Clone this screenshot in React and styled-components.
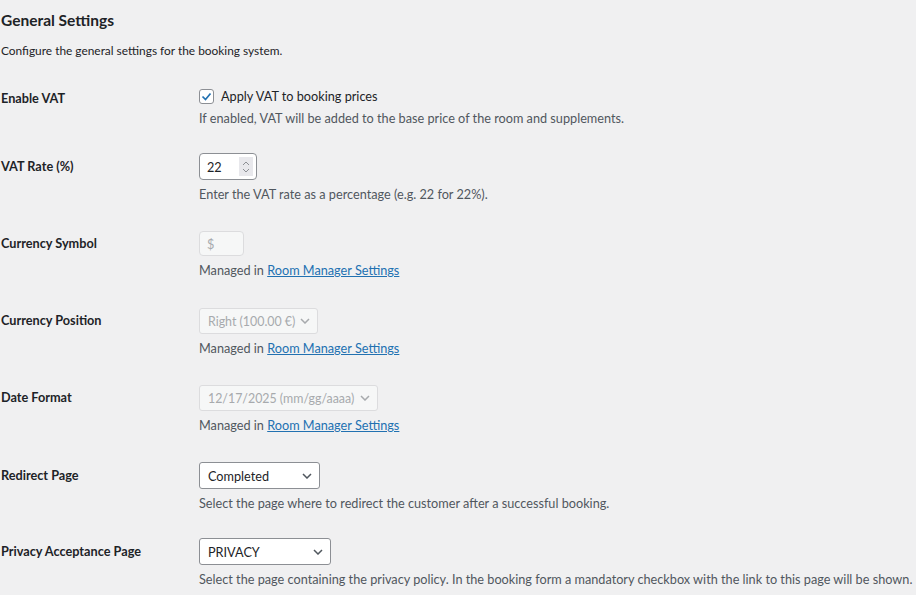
import styled, { createGlobalStyle } from "styled-components";

const GlobalStyle = createGlobalStyle`
  body {
    margin: 0;
    background: #f0f0f1;
    font-family: Lato, "Open Sans", sans-serif;
    color: #1d2327;
  }
`;

const Page = styled.div`
  padding: 8px 0 0 1px;
`;

const Heading = styled.h2`
  font-size: 15.5px;
  font-weight: 700;
  margin: 0;
  line-height: 24px;
  color: #1d2327;
`;

const Intro = styled.p`
  font-size: 11.9px;
  margin: 10px 0 0;
  line-height: 17px;
  color: #1d2327;
`;

const Table = styled.div`
  margin-top: 29px;
  display: flex;
  flex-direction: column;
`;

const Row = styled.div`
  display: grid;
  grid-template-columns: 198px 1fr;
  height: ${(p) => p.h || 77}px;
  align-items: start;
`;

const Label = styled.div`
  font-size: 12.7px;
  font-weight: 700;
  line-height: 17px;
  padding-top: ${(p) => p.top || 0}px;
  color: #1d2327;
`;

const Field = styled.div`
  display: flex;
  flex-direction: column;
  align-items: flex-start;
`;

const Desc = styled.div`
  font-size: 12.7px;
  line-height: 17px;
  margin-top: ${(p) => p.gap || 6}px;
  color: #50575e;
  white-space: nowrap;
`;

const Link = styled.a`
  color: #2271b1;
  text-decoration: underline;
  cursor: pointer;
`;

const CheckLine = styled.label`
  display: flex;
  align-items: center;
  gap: 7px;
  font-size: 12.7px;
  line-height: 17px;
  color: #1d2327;
`;

const Box = styled.span`
  width: 13px;
  height: 13px;
  border: 1px solid #8c8f94;
  border-radius: 3px;
  background: #fff;
  display: flex;
  align-items: center;
  justify-content: center;
`;

const NumberBox = styled.div`
  width: 58px;
  height: 27px;
  box-sizing: border-box;
  border: 1px solid #8c8f94;
  border-radius: 4px;
  background: #fff;
  display: flex;
  align-items: center;
  justify-content: space-between;
  padding: 0 3px 0 7px;
  font-size: 12.7px;
  color: #1d2327;
`;

const Spinner = styled.span`
  width: 14px;
  height: 19px;
  background: #e8e8ec;
  display: flex;
  align-items: center;
  justify-content: center;
`;

const TextBox = styled.div`
  width: ${(p) => p.w}px;
  height: 25px;
  box-sizing: border-box;
  border: 1px solid #dcdcde;
  border-radius: 4px;
  background: #f6f7f7;
  display: flex;
  align-items: center;
  padding-left: 7px;
  font-size: 12.7px;
  color: #a7aaad;
`;

const Select = styled.div`
  width: ${(p) => p.w}px;
  height: ${(p) => (p.disabled ? 26 : 27)}px;
  box-sizing: border-box;
  border: 1px solid ${(p) => (p.disabled ? "#dcdcde" : "#8c8f94")};
  border-radius: 3px;
  background: ${(p) => (p.disabled ? "#f6f7f7" : "#fff")};
  color: ${(p) => (p.disabled ? "#a7aaad" : "#1d2327")};
  display: flex;
  align-items: center;
  justify-content: space-between;
  padding: 0 7px 0 8px;
  font-size: ${(p) => (p.disabled ? 12.4 : 12.7)}px;
  white-space: nowrap;
`;

const Chevron = ({ color }) => (
  <svg width="10" height="6" viewBox="0 0 10 6" fill="none">
    <path d="M1 1l4 4 4-4" stroke={color} strokeWidth="1.5" />
  </svg>
);

const Managed = () => (
  <Desc gap={6}>
    Managed in <Link>Room Manager Settings</Link>
  </Desc>
);

export default function App() {
  return (
    <Page>
      <GlobalStyle />
      <Heading>General Settings</Heading>
      <Intro>Configure the general settings for the booking system.</Intro>
      <Table>
        <Row h={65}>
          <Label top={2}>Enable VAT</Label>
          <Field>
            <CheckLine>
              <Box>
                <svg width="11" height="9" viewBox="0 0 11 9" fill="none">
                  <path d="M1.5 4.5l3 3 5-6" stroke="#2271b1" strokeWidth="1.7" />
                </svg>
              </Box>
              Apply VAT to booking prices
            </CheckLine>
            <Desc gap={5}>If enabled, VAT will be added to the base price of the room and supplements.</Desc>
          </Field>
        </Row>
        <Row h={78}>
          <Label top={5}>VAT Rate (%)</Label>
          <Field>
            <NumberBox>
              22
              <Spinner>
                <svg width="8" height="14" viewBox="0 0 8 14" fill="none">
                  <path d="M1 5l3-3 3 3M1 9l3 3 3-3" stroke="#8c8f94" strokeWidth="1" />
                </svg>
              </Spinner>
            </NumberBox>
            <Desc gap={6}>Enter the VAT rate as a percentage (e.g. 22 for 22%).</Desc>
          </Field>
        </Row>
        <Row>
          <Label top={4}>Currency Symbol</Label>
          <Field>
            <TextBox w={45}>$</TextBox>
            <Managed />
          </Field>
        </Row>
        <Row>
          <Label top={4}>Currency Position</Label>
          <Field>
            <Select w={119} disabled>
              Right (100.00 €) <Chevron color="#a7aaad" />
            </Select>
            <Managed />
          </Field>
        </Row>
        <Row>
          <Label top={4}>Date Format</Label>
          <Field>
            <Select w={179} disabled>
              12/17/2025 (mm/gg/aaaa) <Chevron color="#a7aaad" />
            </Select>
            <Managed />
          </Field>
        </Row>
        <Row h={76}>
          <Label top={5}>Redirect Page</Label>
          <Field>
            <Select w={121}>
              Completed <Chevron color="#50575e" />
            </Select>
            <Desc gap={6}>Select the page where to redirect the customer after a successful booking.</Desc>
          </Field>
        </Row>
        <Row>
          <Label top={5}>Privacy Acceptance Page</Label>
          <Field>
            <Select w={132}>
              PRIVACY <Chevron color="#50575e" />
            </Select>
            <Desc gap={6}>
              Select the page containing the privacy policy. In the booking form a mandatory checkbox with the link to this page will be shown.
            </Desc>
          </Field>
        </Row>
      </Table>
    </Page>
  );
}
